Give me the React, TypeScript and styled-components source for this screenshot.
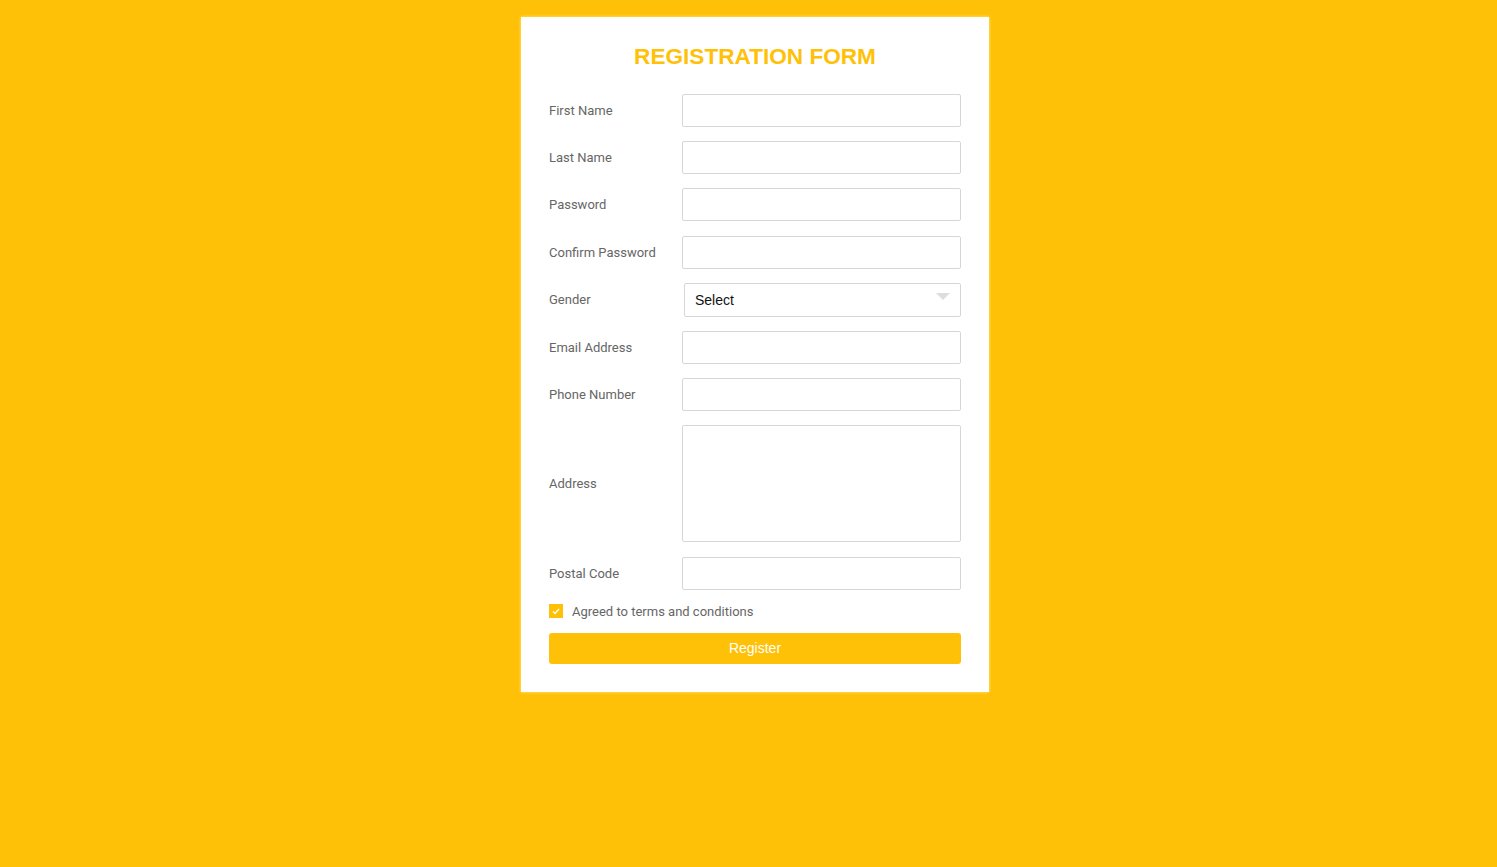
import { createGlobalStyle } from "styled-components"
import styled from "styled-components"

const amber = "#ffc107"

const GlobalStyle = createGlobalStyle`
  html, body {
    margin: 0;
    padding: 0;
    background: ${amber};
    font-family: Roboto, "Liberation Sans", Arial, sans-serif;
  }
`

const Page = styled.div`
  min-height: 867px;
  display: flex;
  justify-content: center;
  align-items: flex-start;
  padding-top: 17px;
  box-sizing: border-box;
`

const Card = styled.form`
  width: 468px;
  box-sizing: border-box;
  background: #fff;
  padding: 23px 28px 28px;
  box-shadow: 0 0 3px rgba(255, 240, 150, 0.9);
  margin-left: 13px;
`

const Title = styled.h1`
  margin: 0 0 20px;
  text-align: center;
  font-family: "Liberation Sans", Arial, sans-serif;
  font-weight: bold;
  font-size: 22.6px;
  line-height: 34px;
  color: ${amber};
`

const Row = styled.div`
  display: flex;
  align-items: center;
  margin-bottom: 14.2px;
`

const Label = styled.label`
  width: 133px;
  flex-shrink: 0;
  font-size: 13px;
  color: #666;
`

const Input = styled.input`
  flex: 1;
  height: 33px;
  box-sizing: border-box;
  border: 1px solid #d6d6d6;
  border-radius: 2px;
  padding: 0 10px;
  font-size: 14px;
  outline: none;
`

const TextArea = styled.textarea`
  flex: 1;
  height: 117px;
  box-sizing: border-box;
  border: 1px solid #d6d6d6;
  border-radius: 2px;
  resize: none;
  outline: none;
`

const SelectBox = styled.div`
  flex: 1;
  margin-left: 2px;
  height: 34px;
  box-sizing: border-box;
  border: 1px solid #d6d6d6;
  border-radius: 2px;
  display: flex;
  align-items: center;
  justify-content: space-between;
  padding: 0 10px 0 10px;
  font-family: "Liberation Sans", Arial, sans-serif;
  font-size: 14px;
  color: #111;
`

const Caret = styled.span`
  width: 0;
  height: 0;
  border-left: 7px solid transparent;
  border-right: 7px solid transparent;
  border-top: 7px solid #ddd;
  margin-top: -6px;
`

const CheckRow = styled.label`
  display: flex;
  align-items: center;
  gap: 9px;
  font-size: 13px;
  color: #666;
  margin: 0 0 14px;
`

const Check = styled.span`
  width: 14px;
  height: 14px;
  background: ${amber};
  display: flex;
  align-items: center;
  justify-content: center;
`

const Button = styled.button`
  width: 100%;
  height: 31px;
  border: none;
  border-radius: 3px;
  background: ${amber};
  color: #fff;
  font-family: "Liberation Sans", Arial, sans-serif;
  font-size: 14px;
  cursor: pointer;
`

const fields = [
  "First Name",
  "Last Name",
  "Password",
  "Confirm Password",
]

const moreFields = ["Email Address", "Phone Number"]

export default function App() {
  return (
    <>
      <GlobalStyle />
      <Page>
        <Card onSubmit={(e) => e.preventDefault()}>
          <Title>REGISTRATION FORM</Title>
          {fields.map((f) => (
            <Row key={f}>
              <Label>{f}</Label>
              <Input type={f.includes("Password") ? "password" : "text"} />
            </Row>
          ))}
          <Row>
            <Label>Gender</Label>
            <SelectBox>
              Select
              <Caret />
            </SelectBox>
          </Row>
          {moreFields.map((f) => (
            <Row key={f}>
              <Label>{f}</Label>
              <Input type="text" />
            </Row>
          ))}
          <Row>
            <Label>Address</Label>
            <TextArea />
          </Row>
          <Row>
            <Label>Postal Code</Label>
            <Input type="text" />
          </Row>
          <CheckRow>
            <Check>
              <svg width="8" height="7" viewBox="0 0 8 7">
                <path d="M1 3.5 L3 5.5 L7 1" stroke="#fff" strokeWidth="1.3" fill="none" />
              </svg>
            </Check>
            Agreed to terms and conditions
          </CheckRow>
          <Button type="submit">Register</Button>
        </Card>
      </Page>
    </>
  )
}
